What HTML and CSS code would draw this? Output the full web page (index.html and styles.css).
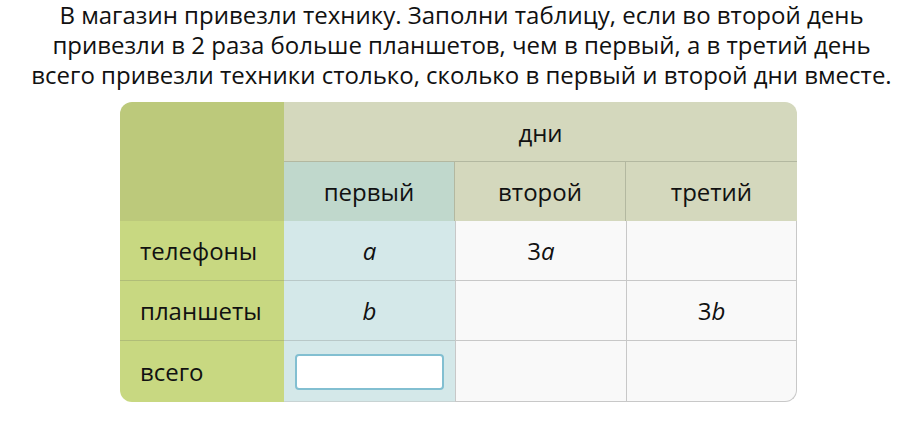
FILE: index.html
```html
<!DOCTYPE html>
<html lang="ru">
<head>
<meta charset="utf-8">
<link rel="stylesheet" href="styles.css">
</head>
<body>
<p class="task">В магазин привезли технику. Заполни таблицу, если во второй день<br>привезли в 2 раза больше планшетов, чем в первый, а в третий день<br>всего привезли техники столько, сколько в первый и второй дни вместе.</p>
<div class="table">
  <div class="cell corner"></div>
  <div class="cell days">дни</div>
  <div class="cell h-first">первый</div>
  <div class="cell h-other">второй</div>
  <div class="cell h-other h-last">третий</div>

  <div class="cell rowh">телефоны</div>
  <div class="cell first"><i>a</i></div>
  <div class="cell data">3<i>a</i></div>
  <div class="cell data last"></div>

  <div class="cell rowh">планшеты</div>
  <div class="cell first"><i>b</i></div>
  <div class="cell data"></div>
  <div class="cell data last">3<i>b</i></div>

  <div class="cell rowh rowh-bottom">всего</div>
  <div class="cell first bottom"><input class="answer" type="text"></div>
  <div class="cell data bottom"></div>
  <div class="cell data last bottom corner-br"></div>
</div>
</body>
</html>
```

FILE: styles.css
```css
* { box-sizing: border-box; }
body {
  margin: 0;
  background: #ffffff;
  font-family: "Open Sans", sans-serif;
  color: #111;
}
.task {
  margin: 0;
  text-align: center;
  font-size: 24px;
  line-height: 30px;
}
.table {
  display: grid;
  grid-template-columns: 164px 171px 171px 171px;
  grid-template-rows: 60px 59px 60px 60px 61px;
  width: 677px;
  margin: 12px 0 0 120px;
  font-size: 24px;
}
.cell {
  display: flex;
  align-items: center;
  justify-content: center;
}
.corner {
  grid-row: 1 / 3;
  background: #bcc97b;
  border-top-left-radius: 12px;
}
.days {
  grid-column: 2 / 5;
  background: #d4d8bd;
  border-top-right-radius: 12px;
  border-bottom: 1px solid #b3b8a0;
  padding-top: 2px;
}
.h-first {
  background: #c0d8cc;
  border-right: 1px solid #b3b8a0;
}
.h-other {
  background: #d4d8bd;
  border-right: 1px solid #b3b8a0;
}
.h-last { border-right: none; }
.rowh {
  background: #c8d881;
  justify-content: flex-start;
  padding-left: 20px;
  border-bottom: 1px solid #b0bd78;
}
.rowh-bottom {
  border-bottom: none;
  border-bottom-left-radius: 12px;
}
.first {
  background: #d4e8e9;
  border-bottom: 1px solid #b9c8c8;
}
.data {
  background: #f9f9f9;
  border-left: 1px solid #c8c8c8;
  border-bottom: 1px solid #c8c8c8;
}
.last { border-right: 1px solid #c8c8c8; }
.first.bottom { border-bottom: 1px solid #c8d3d3; }
.corner-br { border-bottom-right-radius: 12px; }
i { font-style: italic; }
.answer {
  width: 149px;
  height: 36px;
  border: 2px solid #82bfd1;
  border-radius: 4px;
  background: #fff;
  font: inherit;
  outline: none;
  margin-top: 1px;
}
```
